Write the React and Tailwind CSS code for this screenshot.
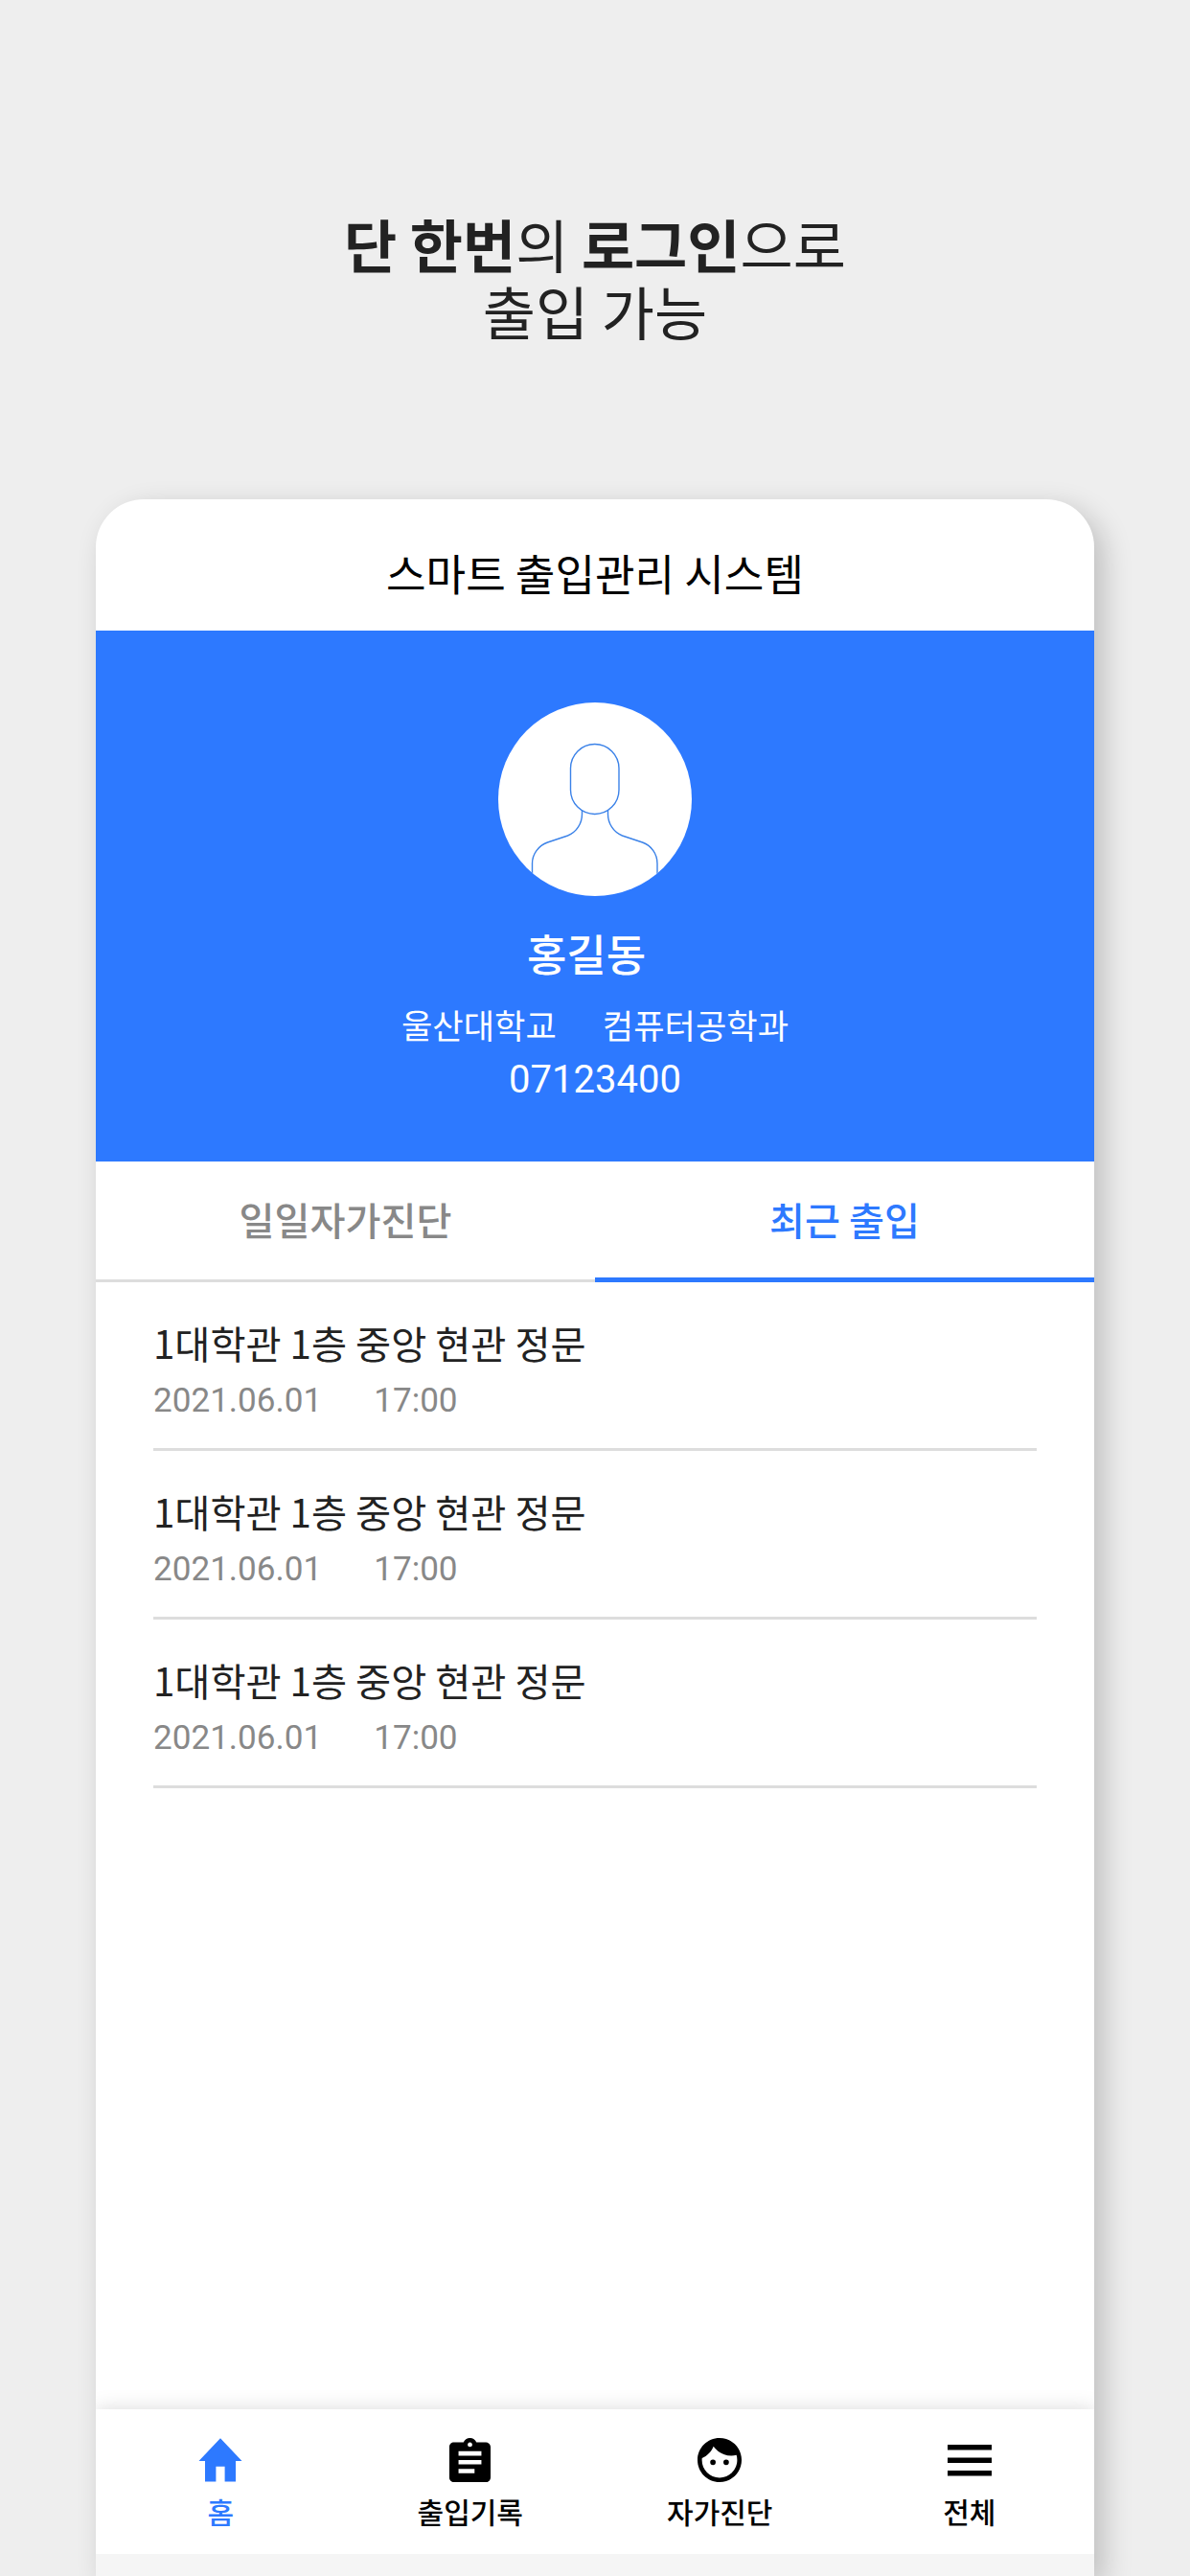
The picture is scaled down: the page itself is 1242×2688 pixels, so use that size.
import React, { useState } from 'react';
import { MdAssignment, MdFace } from 'react-icons/md';

const HomeIcon = () => (
    <svg width="46" height="46" viewBox="0 0 46 46" fill="currentColor">
        <path d="M23 0.3 45.5 24H39v21.5H27.6V29.8h-9.2v15.7H7V24H0.5z" />
    </svg>
);

const MenuIcon = () => (
    <svg width="46" height="46" viewBox="0 0 46 46" fill="currentColor">
        <path d="M0 7h46v5.6H0zM0 20.4h46v5.6H0zM0 33.9h46v5.6H0z" />
    </svg>
);

const entries = [
    { id: 1, place: '1대학관 1층 중앙 현관 정문', date: '2021.06.01', time: '17:00' },
    { id: 2, place: '1대학관 1층 중앙 현관 정문', date: '2021.06.01', time: '17:00' },
    { id: 3, place: '1대학관 1층 중앙 현관 정문', date: '2021.06.01', time: '17:00' }
];

const navItems = [
    { label: '홈', icon: <HomeIcon />, active: true },
    { label: '출입기록', icon: <MdAssignment viewBox="3 1 18 20" preserveAspectRatio="none" className="w-[43px] h-[46px]" /> },
    { label: '자가진단', icon: <MdFace viewBox="2 2 20 20" className="w-[46px] h-[46px]" /> },
    { label: '전체', icon: <MenuIcon /> }
];

const Avatar = () => (
    <div className="w-[202px] h-[202px] rounded-full bg-white overflow-hidden">
        <svg width="202" height="202" viewBox="0 0 202 202" fill="none" stroke="#3b82e8" strokeWidth="1.4">
            <rect x="75.5" y="43.5" width="50.5" height="73" rx="25.2" />
            <path d="M87.5 112.5v4c0 10-6 19-15 22.5l-21 7C42 149.5 35.5 158 35.5 168v14" />
            <path d="M114.5 112.5v4c0 10 6 19 15 22.5l21 7c9.5 3.5 15.5 12 15.5 22v14" />
        </svg>
    </div>
);

const Tab = ({ label, active, onClick }) => (
    <button
        onClick={onClick}
        className={`flex-1 h-[126px] text-[40.2px] font-medium ${active
            ? 'text-[#2d79ff] border-b-[5px] border-[#2d79ff]'
            : 'text-[#888888] border-b-[3px] border-[#dddddd] pb-0.5'
            }`}
    >
        {label}
    </button>
);

const App = () => {
    const [tab, setTab] = useState('recent');

    return (
        <div className="w-[1242px] h-[2688px] bg-[#eeeeee] flex flex-col items-center overflow-hidden font-['Noto_Sans_CJK_KR',sans-serif]">
            <h1 className="h-[521px] pt-[219px] text-center text-[60px] leading-[70px] font-normal text-[#222222]">
                <b className="font-bold">단 한번</b>의 <b className="font-bold">로그인</b>으로
                <br />
                출입 가능
            </h1>

            <div className="w-[1042px] flex-1 flex flex-col bg-white rounded-t-[50px] shadow-[10px_10px_30px_rgba(0,0,0,0.2)]">
                <header className="h-[137px] pt-4 flex items-center justify-center text-[45.2px] text-black">
                    스마트 출입관리 시스템
                </header>

                {/* Profile */}
                <section className="h-[554px] pt-[75px] bg-[#2d79ff] text-white flex flex-col items-center">
                    <Avatar />
                    <div className="mt-7 pr-[18px] text-[45px] leading-[64px] font-medium">홍길동</div>
                    <div className="mt-3.5 flex gap-12 text-[35.2px] leading-[56px]">
                        <span>울산대학교</span>
                        <span>컴퓨터공학과</span>
                    </div>
                    <div className="mt-0.5 text-[40px] leading-[56px] font-[Roboto,sans-serif]">07123400</div>
                </section>

                <div className="flex">
                    <Tab label="일일자가진단" active={tab === 'daily'} onClick={() => setTab('daily')} />
                    <Tab label="최근 출입" active={tab === 'recent'} onClick={() => setTab('recent')} />
                </div>

                {/* Recent entries */}
                <ul className="flex-1 px-[60px]">
                    {entries.map((entry) => (
                        <li key={entry.id} className="h-44 pt-[34px] border-b-[3px] border-[#dddddd]">
                            <div className="text-[40.3px] leading-[58px] text-[#222222]">{entry.place}</div>
                            <div className="mt-2 flex gap-[54px] text-[35.1px] leading-[46px] text-[#888888] font-[Roboto,sans-serif]">
                                <span>{entry.date}</span>
                                <span>{entry.time}</span>
                            </div>
                        </li>
                    ))}
                </ul>

                {/* Bottom navigation */}
                <nav className="h-[151px] pt-[30px] flex bg-white shadow-[0_0_20px_rgba(0,0,0,0.15)] [clip-path:inset(-30px_0_0_0)]">
                    {navItems.map((item) => (
                        <a
                            key={item.label}
                            className={`flex-1 flex flex-col items-center ${item.active ? 'text-[#2d79ff]' : 'text-black'}`}
                        >
                            {item.icon}
                            <span className="mt-2 text-[30px] leading-[44px] font-medium">{item.label}</span>
                        </a>
                    ))}
                </nav>
                <div className="h-[23px] bg-[#f5f5f5]" />
            </div>
        </div>
    );
};

export default App;
